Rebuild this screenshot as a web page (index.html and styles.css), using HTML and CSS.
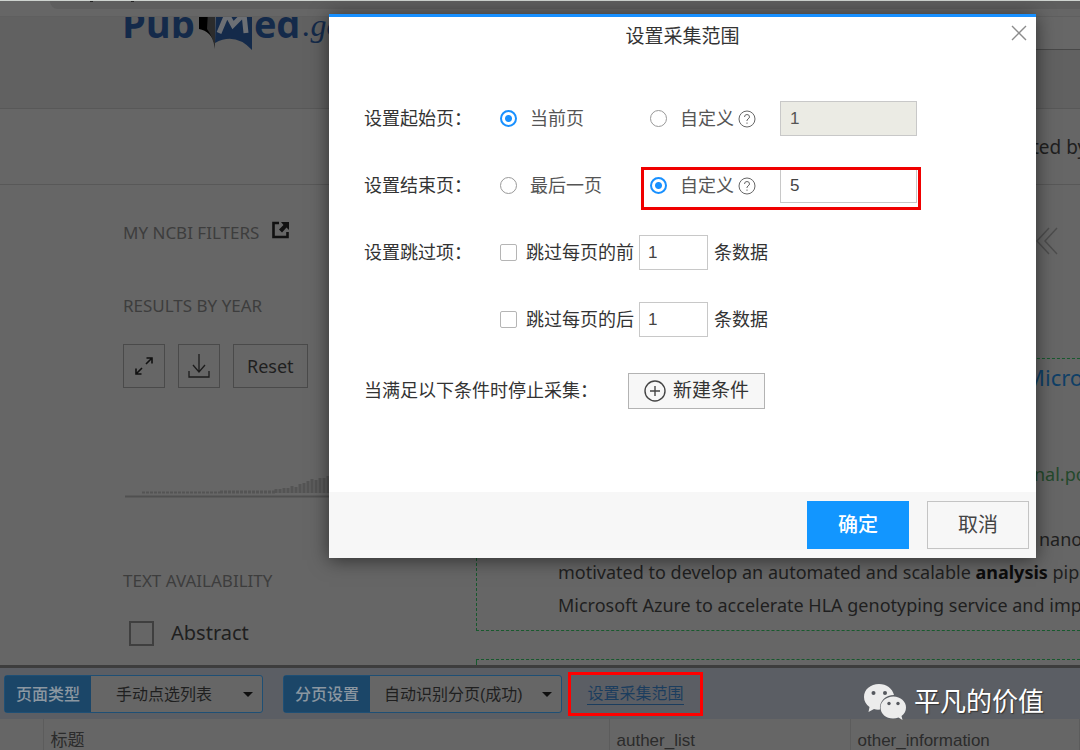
FILE: index.html
```html
<!DOCTYPE html>
<html lang="zh-CN">
<head>
<meta charset="utf-8">
<title>设置采集范围</title>
<link rel="stylesheet" href="styles.css">
</head>
<body>
<div class="app">
  <div class="browser-strip">
    <div class="address-bar">
      <svg width="100" height="3" viewBox="0 0 100 3" aria-hidden="true"><path d="M40 0h3M81 0h3" stroke="#222" stroke-width="2"/></svg>
    </div>
  </div>
  <header class="site-header">
    <div class="logo">
      <span class="logo-word">Pub</span>
      <svg class="logo-mark" width="54" height="50" viewBox="0 0 54 50" aria-hidden="true">
        <path d="M0 0H16V34Q12 20 0 18Z" fill="#000"/>
        <path d="M9 0H16V38Q14 26 8 18Z" fill="#2c2c2c"/>
        <path d="M17 0H53V39Q36 21 16 32Z" fill="#142a4a"/>
        <path d="M20 22L28 3L34 14L45 3L47 22" fill="none" stroke="#6c6f74" stroke-width="5"/>
      </svg>
      <span class="logo-word">ed</span><span class="logo-gov">.gov</span>
    </div>
    <div class="search-box"></div>
  </header>
  <div class="sort-bar"><span class="edge-text">ted by</span></div>
  <main class="content">
    <aside class="sidebar">
      <h2 class="side-title filters-title">MY NCBI FILTERS
        <svg width="18" height="18" viewBox="0 0 18 18" aria-hidden="true">
          <path d="M7 2H1.500V16H15.500V11" fill="none" stroke="#111" stroke-width="2.600"/>
          <path d="M9 1H17V9L14.500 6.500L10 11.500L7 8.500L11.500 4Z" fill="#111"/>
        </svg>
      </h2>
      <h2 class="side-title">RESULTS BY YEAR</h2>
      <div class="year-tools">
        <button class="tool icon-tool" aria-label="Expand">
          <svg width="20" height="20" viewBox="0 0 20 20" fill="none" stroke="#111" stroke-width="1.600"><path d="M12.500 2H18V7.500M17.500 2.500L12 8M2 12.500V18H7.500M2.500 17.500L8 12"/></svg>
        </button>
        <button class="tool icon-tool" aria-label="Download">
          <svg width="22" height="24" viewBox="0 0 22 24" fill="none" stroke="#1c1c1c" stroke-width="1.300"><path d="M11 0V18M5 11L11 18L17 11M1 17V23H21V17"/></svg>
        </button>
        <button class="tool">Reset</button>
      </div>
      <svg class="histogram" width="230" height="24" viewBox="0 0 230 24" aria-hidden="true">
        <path d="M17 18.500H95" stroke="#545454" stroke-width="2" stroke-dasharray="3 1"/>
        <path d="M95 18H150" stroke="#545454" stroke-width="3" stroke-dasharray="3 1"/>
        <path d="M151 19v-4M155 19v-4M159 19v-5M163 19v-5M167 19v-7M171 19v-6M175 19v-9M179 19v-10M183 19v-12M187 19v-14M191 19v-13M195 19v-15M199 19v-15M203 19v-17M207 19v-17M211 19v-17" stroke="#545454" stroke-width="3"/>
        <path d="M0 22.500H230" stroke="#505050" stroke-width="2"/>
      </svg>
      <h2 class="side-title">TEXT AVAILABILITY</h2>
      <label class="filter"><input type="checkbox" class="filter-box">Abstract</label>
    </aside>
    <section class="results">
      <div class="pager">
        <svg width="24" height="28" viewBox="0 0 24 28" fill="none" stroke="#4d4d4d" stroke-width="1.400"><path d="M13 1L1 14L13 27M21 1L9 14L21 27"/></svg>
      </div>
      <article class="result">
        <h3 class="result-title">Micro</h3>
        <p class="journal">nal.po</p>
        <p class="edge-line">nano</p>
        <p class="line">motivated to develop an automated and scalable <b>analysis</b> pipe</p>
        <p class="line">Microsoft Azure to accelerate HLA genotyping service and imp</p>
      </article>
      <article class="result next-result"></article>
    </section>
  </main>
  <div class="toolbar">
    <div class="picker page-type">
      <label for="page-type">页面类型</label>
      <div class="select-wrap"><select id="page-type"><option>手动点选列表</option></select></div>
    </div>
    <div class="picker paging">
      <label for="paging">分页设置</label>
      <div class="select-wrap"><select id="paging"><option>自动识别分页(成功)</option></select></div>
    </div>
    <div class="range-box"><a href="#range">设置采集范围</a></div>
  </div>
  <table class="fields">
    <colgroup><col class="c-index"><col class="c-title"><col class="c-author"><col></colgroup>
    <tr><th></th><th>标题</th><th>auther_list</th><th>other_information</th></tr>
  </table>
</div>

<form class="dialog" id="range" role="dialog" aria-labelledby="dialog-title">
  <div class="dialog-head">
    <h1 id="dialog-title">设置采集范围</h1>
    <button type="button" class="close" aria-label="关闭">
      <svg width="16" height="16" viewBox="0 0 16 16" stroke="#8c8c8c" stroke-width="1.400"><path d="M1 1L15 15M15 1L1 15"/></svg>
    </button>
  </div>
  <div class="dialog-body">
    <div class="row">
      <span class="row-label">设置起始页：</span>
      <label class="choice"><input type="radio" name="start" checked>当前页</label>
      <label class="choice"><input type="radio" name="start">自定义
        <svg class="help" width="18" height="18" viewBox="0 0 18 18" fill="none" stroke="#666"><circle cx="9" cy="9" r="8"/><path d="M6.500 7Q6.500 4.500 9 4.500T11.500 7Q11.500 8 10 9T9 11M9 12.500V13.800"/></svg>
      </label>
      <input class="field" type="text" value="1" aria-label="起始页" disabled>
    </div>
    <div class="row">
      <span class="row-label">设置结束页：</span>
      <label class="choice"><input type="radio" name="end">最后一页</label>
      <div class="marked">
        <label class="choice"><input type="radio" name="end" checked>自定义
          <svg class="help" width="18" height="18" viewBox="0 0 18 18" fill="none" stroke="#666"><circle cx="9" cy="9" r="8"/><path d="M6.500 7Q6.500 4.500 9 4.500T11.500 7Q11.500 8 10 9T9 11M9 12.500V13.800"/></svg>
        </label>
        <input class="field" type="text" value="5" aria-label="结束页">
      </div>
    </div>
    <div class="row">
      <span class="row-label">设置跳过项：</span>
      <div class="skip"><label><input type="checkbox">跳过每页的前</label><input class="field" type="text" value="1" aria-label="前"><span>条数据</span></div>
    </div>
    <div class="row">
      <span class="row-label"></span>
      <div class="skip"><label><input type="checkbox">跳过每页的后</label><input class="field" type="text" value="1" aria-label="后"><span>条数据</span></div>
    </div>
    <div class="stop-row">
      <span>当满足以下条件时停止采集：</span>
      <button type="button" class="add">
        <svg width="22" height="22" viewBox="0 0 22 22" fill="none" stroke="#444" stroke-width="1.400"><circle cx="11" cy="11" r="10"/><path d="M6 11H16M11 6V16"/></svg>新建条件
      </button>
    </div>
  </div>
  <div class="dialog-foot">
    <button type="submit" class="btn primary">确定</button>
    <button type="button" class="btn">取消</button>
  </div>
</form>

<div class="watermark">
  <svg width="42" height="36" viewBox="0 0 42 36" aria-hidden="true">
    <path d="M15 0C6.500 0 0 5.500 0 13C0 17 2 20.500 5.500 23L4.500 28L10 25Q13 26 16 25.500C15 17 22 11 30 11C28.500 4.500 22.500 0 15 0Z" fill="#ececec"/>
    <path d="M29.500 12.500C22 12.500 16.500 17.500 16.500 23.500C16.500 30 22 34.500 29 34.500Q32 34.500 34.500 33.500L38.500 36L37.500 32C40.500 30 42 27 42 23.500C42 17.500 36.500 12.500 29.500 12.500Z" fill="#ececec"/>
    <g fill="#55585e"><circle cx="9.500" cy="9" r="2"/><circle cx="21" cy="9" r="2"/><circle cx="25" cy="19.500" r="1.700"/><circle cx="34" cy="19.500" r="1.700"/></g>
  </svg>
  <span>平凡的价值</span>
</div>
</body>
</html>
```

FILE: styles.css
```css
* { box-sizing: border-box; }

body {
  margin: 0;
  height: 100vh;
  overflow: hidden;
  background: #666;
  color: #1f1f1f;
  font: 18px/24px "Liberation Sans", "Noto Sans CJK SC", sans-serif;
}

h1, h2, h3, p { margin: 0; font-weight: 400; }
button, input, select { font: inherit; color: inherit; margin: 0; }

.app { display: flex; flex-direction: column; height: 100vh; }

/* browser chrome */
.browser-strip {
  flex: none;
  height: 17px;
  border-top: 1px solid #ced3cf;
  border-bottom: 1px solid #5f5f5f;
  padding-left: 50px;
}
.address-bar { height: 8px; border-radius: 0 0 0 10px; background: #5e5e5e; }
.address-bar svg { display: block; }

/* site header */
.site-header {
  flex: none;
  display: flex;
  justify-content: space-between;
  height: 92px;
  padding-left: 122px;
  overflow: hidden;
  background: #616161;
  border-bottom: 1px solid #585858;
}
.logo {
  display: flex;
  height: 48px;
  margin-top: -18px;
  color: #142a4a;
  font: 700 38px/48px "Open Sans", sans-serif;
}
.logo-mark { margin: 12px 1px 0 4px; }
.logo-gov { font: italic 32px/52px "Liberation Serif", serif; margin-left: 2px; }
.search-box { width: 60px; height: 33px; background: #676767; border-bottom: 1px solid #484848; }

.sort-bar {
  flex: none;
  display: flex;
  justify-content: flex-end;
  align-items: center;
  height: 76px;
  border-bottom: 1px solid #585858;
  font: 19px/28px "Noto Sans", sans-serif;
}
.edge-text { width: 48px; overflow: hidden; white-space: nowrap; }

/* page content */
.content {
  flex: 1;
  display: grid;
  grid-template-columns: 476px 1fr;
  min-height: 0;
  overflow: hidden;
  font-family: "Noto Sans", sans-serif;
}
.sidebar { padding: 36px 0 0 123px; }
.side-title { color: #3d3d3d; font-size: 17px; line-height: 24px; }
.filters-title { display: flex; gap: 13px; margin-bottom: 49px; }
.year-tools { display: flex; gap: 13px; margin: 26px 0 86px; }
.tool {
  height: 44px;
  padding: 0 13px;
  border: 1px solid #4a4a4a;
  background: none;
  font-size: 18px;
}
.icon-tool { width: 42px; padding: 0; display: grid; place-items: center; }
.histogram { display: block; margin: 0 0 71px 2px; }
.filter { display: flex; align-items: center; gap: 17px; margin: 26px 0 0 6px; font-size: 20px; line-height: 28px; }
.filter-box { appearance: none; width: 25px; height: 25px; border: 2px solid #3f3f3f; }

.results { display: flex; flex-direction: column; min-width: 0; }
.pager { display: flex; justify-content: flex-end; padding: 42px 20px 103px 0; }
.result {
  padding: 2px 0 8px 81px;
  border: dashed #17592d;
  border-width: 1px 0 1px 1px;
  white-space: nowrap;
  overflow: hidden;
  line-height: 33px;
}
.result-title, .journal, .edge-line { width: 41px; margin-left: auto; }
.result-title { color: #0f3f66; width: 55px; font-size: 22px; margin-bottom: 64px; }
.journal { color: #24492c; width: 46px; margin-bottom: 32px; }
.line, .edge-line, .journal { font-size: 18px; }
.line b { color: #0c0c0c; }
.next-result { flex: 1; margin-top: 28px; padding: 0; border-bottom: 0; }

/* collector toolbar */
.toolbar {
  flex: none;
  display: flex;
  align-items: center;
  height: 54px;
  padding-left: 4px;
  background: #5b5e64;
  border-top: 3px solid #3d3d3d;
  font-size: 16px;
}
.picker {
  display: flex;
  height: 38px;
  border: 1px solid #1e4f75;
  border-radius: 3px;
  background: #666;
}
.picker label { width: 86px; line-height: 38px; text-align: center; background: #1b4668; color: #8b97a1; font-weight: 500; }
.page-type { width: 259px; margin-right: 20px; }
.paging { width: 279px; margin-right: 6px; }
.select-wrap { position: relative; flex: 1; display: flex; }
.select-wrap::after {
  content: "";
  position: absolute;
  right: 9px;
  top: 16px;
  border: 5px solid transparent;
  border-top-color: #0f0f0f;
  border-bottom: 0;
  pointer-events: none;
}
.picker select { appearance: none; flex: 1; border: 0; background: none; padding: 2px 0 0 25px; }
.paging select { padding-left: 14px; }
.range-box { display: grid; place-items: center; width: 135px; height: 44px; border: 3px solid #f00; }
.range-box a { color: #1b3d5e; text-decoration: none; border-bottom: 1px solid #1b3d5e; line-height: 21px; }

.fields { flex: none; width: 100%; height: 31px; border-collapse: collapse; table-layout: fixed; font-size: 17px; line-height: 18px; }
.fields th { padding: 13px 0 0 7px; height: 31px; border-right: 1px solid #5c5c5c; font-weight: 400; text-align: left; white-space: nowrap; vertical-align: top; color: #2b2b2b; }
.c-index { width: 43px; }
.c-title { width: 566px; }
.c-author { width: 241px; }

/* dialog */
.dialog {
  position: absolute;
  top: 14px;
  left: 329px;
  right: 44px;
  border-top: 3px solid #1890ff;
  background: #fff;
  box-shadow: 0 2px 18px rgba(0, 0, 0, .55);
  color: #333;
}
.dialog-head { display: grid; grid-template-columns: 1fr auto 1fr; padding-top: 7px; }
.dialog-head h1 { grid-column: 2; font-size: 19px; line-height: 25px; }
.close { justify-self: end; display: grid; place-items: center; margin-right: 8px; padding: 0; width: 18px; height: 18px; border: 0; background: none; }
.dialog-body { display: flex; flex-direction: column; gap: 32px; padding: 52px 35px 83px; }
.row { display: grid; grid-template-columns: 136px 150px 130px 137px; align-items: center; height: 35px; }
.choice { display: flex; align-items: center; white-space: nowrap; color: #555; }
.help { margin-left: 4px; }
.dialog input[type="radio"] { appearance: none; flex: none; width: 17px; height: 17px; margin-right: 13px; border: 1px solid #999; border-radius: 50%; }
.dialog input[type="radio"]:checked { border: 2px solid #1890ff; background: radial-gradient(circle, #1890ff 3px, #fff 4px); }
.dialog input[type="checkbox"] { appearance: none; flex: none; width: 17px; height: 17px; margin-right: 9px; border: 1px solid #b5b5b5; border-radius: 2px; }
.field { width: 100%; height: 35px; padding: 0 9px; border: 1px solid #c8c8c8; font-size: 17px; color: #444; background: #fff; }
.field:disabled { background: #ebebe4; color: #555; }
.marked { position: relative; grid-column: span 2; display: grid; grid-template-columns: 130px 137px; align-items: center; }
.marked::after { content: ""; position: absolute; inset: -1px -4px -7px -9px; border: 3px solid #f00000; pointer-events: none; }
.skip { grid-column: span 3; display: flex; align-items: center; }
.skip label { display: flex; align-items: center; width: 139px; white-space: nowrap; }
.skip .field { width: 69px; margin-right: 6px; padding: 0 8px; }
.stop-row { display: flex; align-items: center; margin-top: 4px; }
.stop-row span { width: 264px; white-space: nowrap; }
.add { display: flex; align-items: center; justify-content: center; gap: 7px; width: 137px; height: 36px; padding: 0; border: 1px solid #b3b3b3; background: #f7f7f7; font-size: 19px; }
.dialog-foot { display: flex; justify-content: flex-end; gap: 18px; padding: 9px 7px; background: #f7f7f7; }
.btn { width: 102px; height: 48px; padding: 0; border: 1px solid #c4c4c4; background: #f7f7f7; font-size: 20px; color: #444; }
.primary { border-color: #1296ff; background: #1296ff; color: #fff; font-weight: 500; }

.watermark {
  position: absolute;
  right: 36px;
  bottom: 29px;
  display: flex;
  align-items: center;
  gap: 8px;
  color: #fff;
  font-size: 26px;
  line-height: 38px;
  text-shadow: 1px 1px 1px #333;
}
```
